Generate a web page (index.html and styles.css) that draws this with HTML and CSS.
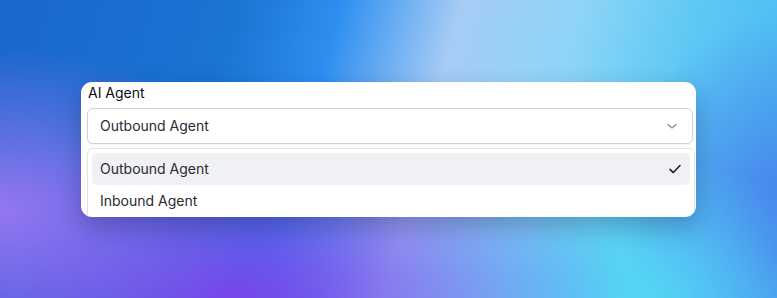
FILE: index.html
```html
<!DOCTYPE html>
<html lang="en">
<head>
    <meta charset="UTF-8">
    <meta name="viewport" content="width=device-width, initial-scale=1.0">
    <title>AI Agent</title>
    <link rel="stylesheet" href="styles.css">
</head>
<body>
    <div class="card">
        <div class="label">AI Agent</div>
        <div class="select">
            <span>Outbound Agent</span>
            <svg class="chevron" width="12" height="12" viewBox="0 0 12 12">
                <path d="M2 4.5 L6 8 L10 4.5" fill="none" stroke="#8a8a90" stroke-width="1.2" stroke-linecap="round" stroke-linejoin="round"/>
            </svg>
        </div>
        <div class="menu">
            <div class="item active">
                <span>Outbound Agent</span>
                <svg class="check" width="14" height="14" viewBox="0 0 14 14">
                    <path d="M2 7.4 L5.3 10.6 L12 3.6" fill="none" stroke="#1d1d22" stroke-width="1.5" stroke-linecap="round" stroke-linejoin="round"/>
                </svg>
            </div>
            <div class="item">
                <span>Inbound Agent</span>
            </div>
        </div>
    </div>
</body>
</html>
```

FILE: styles.css
```css
html, body {
    height: 100%;
}
body {
    margin: 0;
    font-family: Inter, "Noto Sans", sans-serif;
    display: flex;
    align-items: center;
    justify-content: center;
    background:
        radial-gradient(ellipse 260px 160px at 0% 70%, rgba(160, 120, 245, 0.9), rgba(160, 120, 245, 0) 100%),
        radial-gradient(ellipse 400px 170px at 30% 100%, rgba(120, 70, 235, 1), rgba(120, 70, 235, 0) 100%),
        radial-gradient(ellipse 260px 140px at 80% 100%, rgba(85, 215, 245, 1), rgba(85, 215, 245, 0) 100%),
        radial-gradient(ellipse 160px 240px at 100% 85%, rgba(70, 110, 235, 0.9), rgba(70, 110, 235, 0) 100%),
        linear-gradient(105deg, #1b66cc 0%, #1a74d2 28%, #2e8ff0 40%, #a6ccf5 54%, #8ed5f7 68%, #5cc8f4 82%, #45b8f0 100%);
}
.card {
    width: 615px;
    height: 135px;
    padding: 1px 1px 0 6px;
    box-sizing: border-box;
    background: #fff;
    border-radius: 11px;
    overflow: hidden;
    box-shadow: 0 10px 24px rgba(20, 20, 60, 0.28);
}
.label {
    font-size: 14px;
    font-weight: 400;
    line-height: 20px;
    color: #0c0c10;
    padding-left: 1px;
    margin-bottom: 5px;
}
.select {
    height: 36px;
    margin-right: 2px;
    box-sizing: border-box;
    border: 1px solid #cfd0d5;
    border-radius: 6px;
    box-shadow: 0 1px 2px rgba(0, 0, 0, 0.06);
    display: flex;
    align-items: center;
    justify-content: space-between;
    padding: 0 14px 0 12px;
    font-size: 14px;
    color: #2a2a30;
}
.chevron {
    display: block;
}
.menu {
    margin-top: 4px;
    border: 1px solid #e3e4e8;
    border-radius: 6px;
    padding: 4px;
    box-shadow: 0 2px 6px rgba(0, 0, 0, 0.05);
}
.item {
    height: 32px;
    display: flex;
    align-items: center;
    justify-content: space-between;
    padding: 0 8px 0 8px;
    border-radius: 5px;
    font-size: 14px;
    color: #2a2a30;
}
.item.active {
    background: #f0f1f4;
}
.check {
    display: block;
}
```
